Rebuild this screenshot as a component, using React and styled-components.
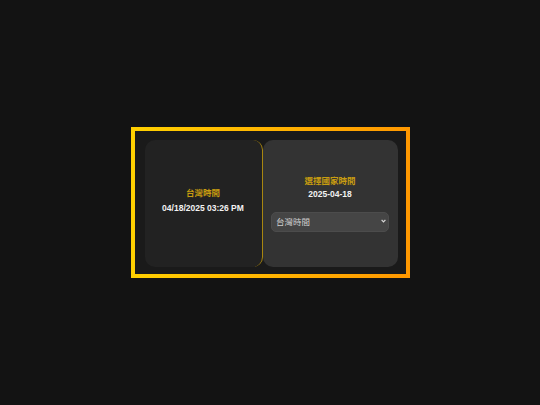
import styled, { createGlobalStyle } from "styled-components";

const GlobalStyle = createGlobalStyle`
  html, body {
    margin: 0;
    padding: 0;
    background-color: #131313;
    font-family: "Liberation Sans", "Noto Sans CJK TC", sans-serif;
  }
`;

const Page = styled.div`
  width: 540px;
  height: 405px;
  display: flex;
  align-items: center;
  justify-content: center;
`;

const Frame = styled.div`
  width: 279px;
  height: 151px;
  box-sizing: border-box;
  border: 4px solid;
  border-image: linear-gradient(to right, #ffd000, #ff9800) 1;
  background-color: #1a1a1a;
  padding: 9px 8px 7px 10px;
  display: flex;
`;

const Card = styled.div`
  display: flex;
  flex-direction: column;
  align-items: center;
  justify-content: center;
  box-sizing: border-box;
  width: ${props => props.$width}px;
  background-color: ${props => props.$bg};
  border-radius: 10px;
  border-right: ${props => props.$divider ? "1px solid #a8860f" : "none"};
  padding-bottom: ${props => props.$lift || 0}px;
`;

const Title = styled.div`
  font-size: 8.5px;
  font-weight: 700;
  color: #c79c10;
  line-height: 10px;
  margin-bottom: ${props => props.$gap}px;
`;

const DateText = styled.div`
  font-size: 8.5px;
  font-weight: 700;
  color: #f2f2f2;
  line-height: 10px;
`;

const SelectWrap = styled.div`
  position: relative;
  margin-top: 12px;
  width: 118px;
  height: 20px;
`;

const Select = styled.select`
  appearance: none;
  width: 100%;
  height: 100%;
  box-sizing: border-box;
  background-color: #454545;
  color: #cfcfcf;
  border: 1px solid #4c4c4c;
  border-radius: 5px;
  padding: 0 10px 0 4px;
  font-family: "Liberation Sans", "Noto Sans CJK TC", sans-serif;
  font-size: 8.5px;
  outline: none;
`;

const Chevron = styled.svg`
  position: absolute;
  right: 3px;
  top: 8px;
  width: 5px;
  height: 4px;
  pointer-events: none;
`;

export default function App() {
  return (
    <>
      <GlobalStyle />
      <Page>
        <Frame>
          <Card $width={118} $bg="#222222" $divider $lift={6}>
            <Title $gap={5}>台灣時間</Title>
            <DateText>04/18/2025 03:26 PM</DateText>
          </Card>
          <Card $width={135} $bg="#333333">
            <Title $gap={3}>選擇國家時間</Title>
            <DateText>2025-04-18</DateText>
            <SelectWrap>
              <Select defaultValue="tw">
                <option value="tw">台灣時間</option>
                <option value="jp">日本時間</option>
                <option value="us">美國時間</option>
              </Select>
              <Chevron viewBox="0 0 5 4">
                <path d="M0.6 0.8 L2.5 2.9 L4.4 0.8" fill="none" stroke="#d8d8d8" strokeWidth="1.2" />
              </Chevron>
            </SelectWrap>
          </Card>
        </Frame>
      </Page>
    </>
  );
}
